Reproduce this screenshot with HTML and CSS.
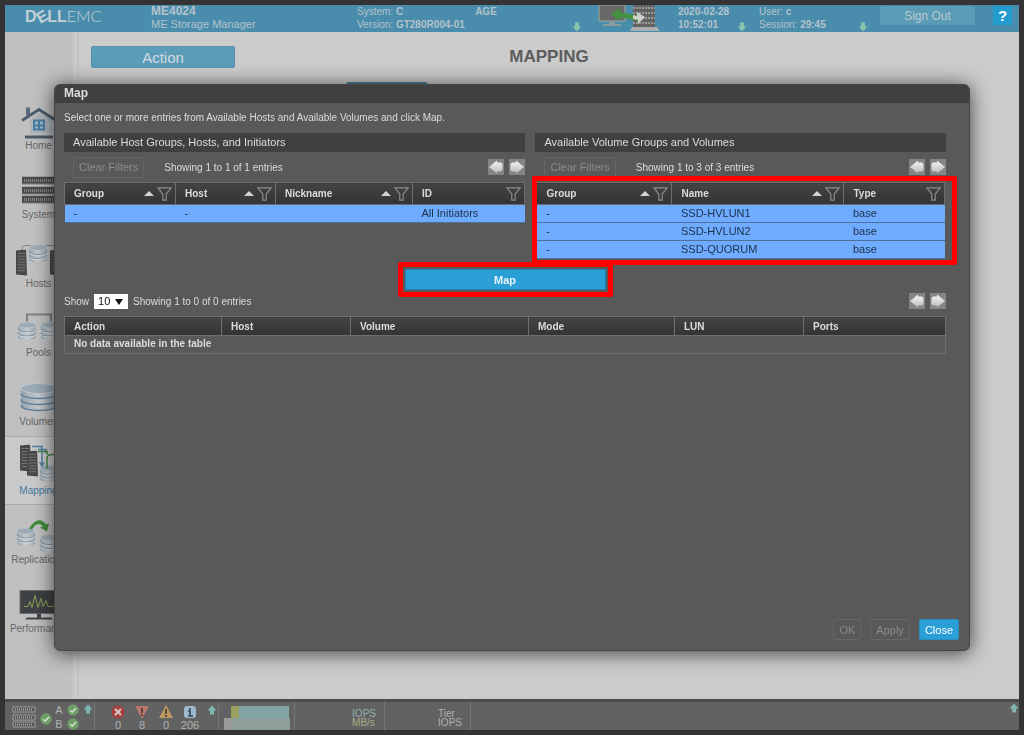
FILE: index.html
```
<!DOCTYPE html>
<html lang="en">
<head>
  <meta charset="UTF-8" />
  <title>ME Storage Manager</title>
  <link rel="stylesheet" href="styles.css">
</head>
<body>

<!-- shared icons -->
<svg class="sprite" aria-hidden="true">
  <linearGradient id="silver" x1="0" y1="0" x2="0" y2="1">
    <stop offset="0" stop-color="#fafafa"/><stop offset="1" stop-color="#b8b8b8"/>
  </linearGradient>
  <linearGradient id="disk" x1="0" y1="0" x2="1" y2="0">
    <stop offset="0" stop-color="#96a2ab"/><stop offset=".5" stop-color="#c6cbce"/><stop offset="1" stop-color="#97a3ac"/>
  </linearGradient>
  <symbol id="funnel" viewBox="0 0 15 14"><path d="M.8.8h13.4L9.2 7v6.2H5.8V7z" fill="none" stroke="#8c8c8c" stroke-width="1.2"/></symbol>
  <symbol id="sort" viewBox="0 0 10 5"><path d="M0 5 5 0l5 5z" fill="#d4d4d4"/></symbol>
  <symbol id="prev" viewBox="0 0 16 16"><path d="M1 8 9 1.500V3.500H13L14.500 5V11L13 12.500H9V14.500z" fill="url(#silver)"/></symbol>
  <symbol id="next" viewBox="0 0 16 16"><path d="M15 8 7 1.500V3.500H3L1.500 5V11L3 12.500H7V14.500z" fill="url(#silver)"/></symbol>
  <symbol id="arrow" viewBox="0 0 10 10"><path d="M5 .5 9.500 5.500H7V9.500H3V5.500H.5z"/></symbol>
  <symbol id="check" viewBox="0 0 12 12"><circle cx="6" cy="6" r="5.700" fill="#6f9d68"/><path d="M3.200 6.200 5.200 8.200 9 4" fill="none" stroke="#d5e2d2" stroke-width="1.600"/></symbol>
  <symbol id="cylinder" viewBox="0 0 20 20">
    <path d="M1 4v12c0 2 4 3 9 3s9-1 9-3V4z" fill="url(#disk)"/>
    <path d="M1 8c0 2 4 3 9 3s9-1 9-3M1 12c0 2 4 3 9 3s9-1 9-3" fill="none" stroke="#7e8e9b"/>
    <path d="M1 9c0 2 4 3 9 3s9-1 9-3M1 13c0 2 4 3 9 3s9-1 9-3" fill="none" stroke="#d8dbdc"/>
    <ellipse cx="10" cy="4" rx="9" ry="3" fill="#9cabb5" stroke="#bcc5ca"/>
  </symbol>
  <symbol id="rack" viewBox="0 0 12 28" preserveAspectRatio="none">
    <path d="M0 1 11 0 12 27 0 26z" fill="#484848"/>
    <path d="M2 4h8M2 7h8M2 10h8M2 13h8M2 16h8M2 19h8M2 22h8" stroke="#777"/>
  </symbol>
  <symbol id="shelf" viewBox="0 0 36 8">
    <path d="M0 0h36v8H0z" fill="#4c4c4c"/><path d="M2 4h32" stroke="#858585" stroke-width="3" stroke-dasharray="1 1"/><path d="M0 7.500h36" stroke="#858585"/>
  </symbol>
</svg>

<div class="app">
  <header class="banner">
    <div class="logo"><b>D<span class="tilt">E</span>LL</b><span class="emc">EMC</span></div>
    <div class="product"><b>ME4024</b><br>ME Storage Manager</div>
    <div class="system">
      <div>System: <b>C</b><b class="age">AGE</b><br>Version: <b>GT280R004-01</b></div>
      <svg class="arrow down"><use href="#arrow"/></svg>
    </div>
    <div class="link-state">
      <svg viewBox="0 0 66 27" width="66" height="27">
        <path d="M2 0h26v16H2z" fill="#686868" stroke="#a5a5a5"/><path d="M12 17h6v2H12zM6 19h18v2H6z" fill="#8e9ba1"/>
        <path d="M36 0h22v22H36z" fill="#626262"/><path d="M36 3h22M36 8h22M36 13h22M36 18h22" stroke="#999" stroke-width="2" stroke-dasharray="2 1"/>
        <path d="M35 22h25l3 4H33z" fill="#a9afb2"/>
        <path d="M14 9 23 3v4l18 4v5L23 12v4z" fill="#43923f"/><path d="M40 7 48 12 41 19v-4l-5-1v-4l4 1z" fill="#c8d2c6"/>
      </svg>
    </div>
    <div class="clock">
      <b>2020-02-28<br>10:52:01</b>
      <svg class="arrow down"><use href="#arrow"/></svg>
    </div>
    <div class="user">
      <div>User: <b>c</b><br>Session: <b>29:45</b></div>
      <svg class="arrow down"><use href="#arrow"/></svg>
    </div>
    <div class="tools"><button class="sign-out" type="button">Sign Out</button></div>
    <div class="tools"><button class="help" type="button">?</button></div>
  </header>

  <div class="workspace">
    <nav class="sidebar">
      <a href="#home">
        <svg viewBox="0 0 46 34"><path d="M14 14 24 7 36 14V28H14z" fill="#aeb6bb"/><path d="M10 2h4v8h-4z" fill="#57697a"/><path d="M6 15 23 4 40 15" fill="none" stroke="#4d5e6e" stroke-width="3"/><path d="M17 14h12v11H17z" fill="#4b7da0"/><path d="M19 16h3v3h-3zM24 16h3v3h-3zM19 21h3v2h-3zM24 21h3v2h-3z" fill="#9bbacb"/><path d="M9 30h28v3H9z" fill="#4e5b66"/></svg>
        Home
      </a>
      <a href="#system">
        <svg viewBox="0 0 46 34"><use href="#shelf" x="6" y="2" width="36" height="8"/><use href="#shelf" x="6" y="12" width="36" height="8"/><use href="#shelf" x="6" y="21" width="36" height="8"/></svg>
        System
      </a>
      <a href="#hosts">
        <svg viewBox="0 0 46 34"><path d="M6 7V4q0-2 3-2h28q3 0 3 2v3" fill="none" stroke="#7b8287"/><use href="#cylinder" x="12" y="0" width="20" height="20"/><use href="#rack" x="0" y="6" width="11" height="27"/><use href="#rack" x="34" y="6" width="11" height="27"/></svg>
        Hosts
      </a>
      <a href="#pools">
        <svg viewBox="0 0 46 34"><path d="M11 12V2h24v10" fill="none" stroke="#808080" stroke-width="2"/><use href="#cylinder" x="1" y="8" width="20" height="21"/><use href="#cylinder" x="24" y="8" width="20" height="21"/></svg>
        Pools
      </a>
      <a href="#volumes">
        <svg viewBox="0 0 46 34"><path d="M5 7v17c0 3 8 5 18 5s18-2 18-5V7z" fill="url(#disk)"/><path d="M5 12c0 3 8 5 18 5s18-2 18-5M5 18c0 3 8 5 18 5s18-2 18-5M5 24c0 3 8 5 18 5s18-2 18-5" fill="none" stroke="#5f7f9d" stroke-width="1.500"/><ellipse cx="23" cy="7" rx="18" ry="5" fill="#9aaab6" stroke="#c4cbd0"/></svg>
        Volumes
      </a>
      <a href="#mapping" class="selected">
        <svg viewBox="0 0 46 38"><use href="#cylinder" x="22" y="20" width="20" height="18"/><use href="#rack" x="4" y="0" width="11" height="28"/><use href="#rack" x="11" y="6" width="11" height="27"/><path d="M16 2h10v18M22 5h8v4" fill="none" stroke="#527d9c" stroke-width="1.500"/><path d="M22 7h9v3M31 24V14q0-4 5-4h6v8" fill="none" stroke="#438643" stroke-width="1.500"/><path d="m23 18 3 5 3-5z" fill="#527d9c"/></svg>
        Mapping
      </a>
      <a href="#replications">
        <svg viewBox="0 0 46 34"><use href="#cylinder" x="0" y="7" width="20" height="21"/><use href="#cylinder" x="23" y="14" width="20" height="20"/><path d="M13 9Q22-5 30 5l3-1-2 8-7-4 3-1q-5-6-11 3z" fill="#3e8b3b"/></svg>
        Replications
      </a>
      <a href="#performance">
        <svg viewBox="0 0 46 34"><path d="M4 2h38v23H4z" fill="#3f4245" stroke="#6d6d6d"/><path d="M8 18h4l2-5 2 6 3-12 3 12 3-9 2 8 3-6 2 6h6" fill="none" stroke="#87a054"/><path d="M21 25h4v4h-4zM11 29h24l2 2H9z" fill="#444"/></svg>
        Performance
      </a>
    </nav>

    <main class="page">
      <div class="page-head">
        <button class="action" type="button">Action</button>
        <h1>MAPPING</h1>
      </div>
      <div class="tabs"><span class="tab"></span></div>
    </main>
  </div>

  <footer class="status">
    <div class="cell health">
      <svg viewBox="0 0 24 22" width="24" height="22"><path d="M1 1h22v5H1zM1 9h22v5H1zM1 16h22v5H1z" fill="#555" stroke="#a09f9f"/><path d="M3 3.500h18M3 11.500h18M3 18.500h18" stroke="#aaa" stroke-width="2" stroke-dasharray="1 1"/></svg>
      <svg class="ok"><use href="#check"/></svg>
      <div class="controllers">
        <span>A</span><svg class="ok"><use href="#check"/></svg>
        <span>B</span><svg class="ok"><use href="#check"/></svg>
      </div>
      <svg class="arrow"><use href="#arrow"/></svg>
    </div>
    <div class="cell events">
      <div><svg viewBox="0 0 14 14"><circle cx="7" cy="7" r="6.500" fill="#a83f41"/><path d="m4 4 6 6M10 4l-6 6" stroke="#d5c8c8" stroke-width="2"/></svg>0</div>
      <div><svg viewBox="0 0 14 14"><path d="M0 1h14L7 14z" fill="#b9786c"/><path d="M7 3v5M7 9v2" stroke="#4e3531" stroke-width="1.600"/></svg>8</div>
      <div><svg viewBox="0 0 14 14"><path d="M7 0 14 13H0z" fill="#bc9a61"/><path d="M7 4v5M7 10v2" stroke="#3e372b" stroke-width="1.600"/></svg>0</div>
      <div><svg viewBox="0 0 14 14"><rect x="1" y="1" width="12" height="12" rx="3" fill="#9fb8cb"/><path d="M5 6h2v5M5 11h5M7 3v2" fill="none" stroke="#31465c" stroke-width="1.600"/></svg>206</div>
      <svg class="arrow"><use href="#arrow"/></svg>
    </div>
    <div class="cell capacity">
      <div class="bar pool"><i></i></div>
      <div class="bar disks"><i></i></div>
    </div>
    <div class="cell iops"><span>IOPS<br><em>MB/s</em></span></div>
    <div class="cell tier"><span>Tier<br>IOPS</span></div>
    <svg class="arrow last"><use href="#arrow"/></svg>
  </footer>
</div>

<!-- map dialog -->
<section class="dialog" role="dialog" aria-labelledby="dialogTitle">
  <h2 id="dialogTitle">Map</h2>
  <div class="dialog-body">
    <p class="hint">Select one or more entries from Available Hosts and Available Volumes and click Map.</p>

    <div class="panels">
      <div class="panel">
        <h3>Available Host Groups, Hosts, and Initiators</h3>
        <div class="toolbar">
          <button class="ghost" type="button" disabled>Clear Filters</button>
          <span>Showing 1 to 1 of 1 entries</span>
          <div class="pager">
            <button type="button" aria-label="Previous"><svg><use href="#prev"/></svg></button>
            <button type="button" aria-label="Next"><svg><use href="#next"/></svg></button>
          </div>
        </div>
        <table class="grid hosts">
          <colgroup><col class="c1"><col class="c2"><col class="c3"><col></colgroup>
          <thead>
            <tr>
              <th><div>Group<svg class="sort"><use href="#sort"/></svg><svg class="funnel"><use href="#funnel"/></svg></div></th>
              <th><div>Host<svg class="sort"><use href="#sort"/></svg><svg class="funnel"><use href="#funnel"/></svg></div></th>
              <th><div>Nickname<svg class="sort"><use href="#sort"/></svg><svg class="funnel"><use href="#funnel"/></svg></div></th>
              <th><div>ID<svg class="funnel only"><use href="#funnel"/></svg></div></th>
            </tr>
          </thead>
          <tbody>
            <tr><td>-</td><td>-</td><td></td><td>All Initiators</td></tr>
          </tbody>
        </table>
      </div>

      <div class="panel">
        <h3>Available Volume Groups and Volumes</h3>
        <div class="toolbar">
          <button class="ghost" type="button" disabled>Clear Filters</button>
          <span>Showing 1 to 3 of 3 entries</span>
          <div class="pager">
            <button type="button" aria-label="Previous"><svg><use href="#prev"/></svg></button>
            <button type="button" aria-label="Next"><svg><use href="#next"/></svg></button>
          </div>
        </div>
        <div class="marked">
          <table class="grid volumes">
            <colgroup><col class="c1"><col class="c2"><col></colgroup>
            <thead>
              <tr>
                <th><div>Group<svg class="sort"><use href="#sort"/></svg><svg class="funnel"><use href="#funnel"/></svg></div></th>
                <th><div>Name<svg class="sort"><use href="#sort"/></svg><svg class="funnel"><use href="#funnel"/></svg></div></th>
                <th><div>Type<svg class="funnel only"><use href="#funnel"/></svg></div></th>
              </tr>
            </thead>
            <tbody>
              <tr><td>-</td><td>SSD-HVLUN1</td><td>base</td></tr>
              <tr><td>-</td><td>SSD-HVLUN2</td><td>base</td></tr>
              <tr><td>-</td><td>SSD-QUORUM</td><td>base</td></tr>
            </tbody>
          </table>
        </div>
      </div>
    </div>

    <div class="map-row">
      <div class="map-mark"><button class="map" type="button">Map</button></div>
    </div>

    <div class="show-row">
      <label for="pageSize">Show</label>
      <div class="picker">
        <select id="pageSize"><option>10</option><option>20</option><option>50</option></select>
      </div>
      <span>Showing 1 to 0 of 0 entries</span>
      <div class="pager">
        <button type="button" aria-label="Previous"><svg><use href="#prev"/></svg></button>
        <button type="button" aria-label="Next"><svg><use href="#next"/></svg></button>
      </div>
    </div>

    <table class="result">
      <colgroup><col class="c1"><col class="c2"><col class="c3"><col class="c4"><col class="c5"><col></colgroup>
      <thead>
        <tr><th>Action</th><th>Host</th><th>Volume</th><th>Mode</th><th>LUN</th><th>Ports</th></tr>
      </thead>
      <tbody>
        <tr><td colspan="6">No data available in the table</td></tr>
      </tbody>
    </table>
  </div>

  <div class="dialog-foot">
    <button class="ghost" type="button" disabled>OK</button>
    <button class="ghost" type="button" disabled>Apply</button>
    <button class="close" type="button">Close</button>
  </div>
</section>

</body>
</html>
```
FILE: styles.css
```
* {
  box-sizing: border-box;
}

body {
  margin: 0;
  background: #343434;
  font-family: "Liberation Sans", Arial, sans-serif;
  font-size: 10px;
  color: #dcdcdc;
}

h1, h2, h3, p {
  margin: 0;
}

button, select {
  font-family: inherit;
  margin: 0;
  padding: 0;
}

svg {
  display: block;
  flex: none;
}

.sprite {
  position: absolute;
  width: 0;
  height: 0;
}

.app {
  display: flex;
  flex-direction: column;
  height: 100vh;
  padding: 5px;
  overflow: hidden;
}

.arrow {
  width: 10px;
  height: 10px;
  fill: #7fb5ae;
}

.arrow.down {
  transform: rotate(180deg);
  fill: #8cc4b0;
}

/* top banner */
.banner {
  display: grid;
  grid-template-columns: 146px 206px 1fr 81px 81px 121px 113px 26px;
  grid-template-rows: 27px;
  flex: none;
  background: #4a8cab;
  color: #b3c3cb;
  line-height: 13px;
}

.logo {
  padding-left: 20px;
  font-size: 16px;
  line-height: 22px;
  color: #c3d0d7;
}

.logo .tilt {
  display: inline-block;
  transform: rotate(-30deg);
}

.logo .emc {
  font-family: Lato, sans-serif;
  font-weight: 300;
}

.product {
  font-size: 11px;
}

.product b {
  font-size: 12px;
}

.system, .clock, .user {
  display: flex;
  justify-content: space-between;
  align-items: flex-end;
}

.system {
  padding-right: 15px;
}

.age {
  margin-left: 72px;
}

.clock {
  padding-right: 12px;
}

.user {
  padding-right: 12px;
}

.system > div, .clock > b, .user > div {
  align-self: flex-start;
}

.tools {
  padding-top: 1px;
}

.sign-out {
  width: 95px;
  height: 19px;
  border: 0;
  border-radius: 2px;
  background: #5a9bb6;
  color: #b9cad1;
  font-size: 12px;
}

.help {
  width: 19px;
  height: 19px;
  border: 0;
  background: #229bcf;
  color: #fff;
  font-size: 15px;
  font-weight: bold;
}

/* page behind the dialog */
.workspace {
  display: flex;
  flex: 1;
  min-height: 0;
  background: #cbcbcb;
}

.sidebar {
  flex: none;
  width: 67px;
  padding-top: 59px;
  background: #c0c0c0;
  overflow: hidden;
}

.sidebar a {
  display: flex;
  flex-direction: column;
  align-items: center;
  height: 69px;
  padding-top: 14px;
  line-height: 12px;
  color: #666;
  text-decoration: none;
}

.sidebar svg {
  width: 46px;
  height: 35px;
}

.sidebar .selected {
  padding-top: 5px;
  border-top: 1px solid #aaa;
  border-bottom: 1px solid #aaa;
  background: #c9c9c9;
  color: #4678a0;
}

.sidebar .selected svg {
  height: 43px;
}

.page {
  flex: 1;
  border-left: 7px double #c4c4c4;
}

.page-head {
  display: grid;
  grid-template-columns: 1fr auto 1fr;
  align-items: center;
  padding: 14px 12px;
}

.action {
  width: 144px;
  height: 22px;
  border: 1px solid #5692ad;
  border-radius: 2px;
  background: #5b9cb9;
  color: #d3dce0;
  font-size: 15px;
}

.page h1 {
  font-size: 17px;
  line-height: 20px;
  color: #5c5c5c;
}

.tabs {
  padding-left: 267px;
}

.tab {
  display: block;
  width: 82px;
  height: 20px;
  border-radius: 3px;
  background: #4a7f96;
}

/* bottom status bar */
.status {
  display: flex;
  flex: none;
  height: 31px;
  border-top: 3px solid #4b4b4b;
  background: #626262;
  overflow: hidden;
  color: #b0b0b0;
  font-size: 11px;
}

.cell {
  display: flex;
  border-right: 1px solid #777;
}

.health {
  width: 90px;
  padding: 2px 1px 0 7px;
  gap: 2px;
  justify-content: space-between;
}

.health > svg:first-child {
  margin-top: 2px;
}

.ok {
  width: 12px;
  height: 12px;
}

.health > .ok {
  margin-top: 9px;
}

.controllers {
  display: grid;
  grid-template-columns: 10px 12px;
  gap: 2px;
  line-height: 12px;
}

.events {
  width: 124px;
  padding: 3px 1px 0 11px;
}

.events div {
  display: flex;
  flex-direction: column;
  align-items: center;
  width: 24px;
  line-height: 12px;
}

.events div svg {
  width: 14px;
  height: 14px;
}

.events .arrow {
  margin-left: auto;
}

.capacity {
  flex-direction: column;
  width: 76px;
  padding: 4px 4px 0 5px;
}

.bar {
  display: flex;
  background: #81a5a2;
  height: 12px;
}

.bar i {
  width: 8px;
  background: #9a9f5d;
}

.bar.pool {
  margin: 0 1px 0 7px;
}

.bar.disks {
  background: #8d9e9b;
}

.bar.disks i {
  background: #999;
}

.iops, .tier {
  justify-content: flex-end;
  padding: 7px 8px 0 0;
  font-size: 10px;
  line-height: 9px;
}

.iops {
  width: 90px;
  color: #8fb0ab;
}

.iops em {
  font-style: normal;
  color: #a7ad83;
}

.tier {
  width: 86px;
}

.last {
  margin: 1px 0 0 auto;
}

/* dialog */
.dialog {
  position: fixed;
  inset: 84px 54px;
  display: flex;
  flex-direction: column;
  border: 1px solid #474747;
  border-radius: 6px;
  background: #595959;
  box-shadow: 0 2px 20px rgba(0, 0, 0, 0.7);
}

.dialog h2 {
  height: 18px;
  padding-left: 9px;
  border-radius: 5px 5px 0 0;
  background: #404040;
  font-size: 12px;
  line-height: 17px;
}

.dialog-body {
  flex: 1;
  padding: 7px 23px 0 9px;
}

.hint {
  line-height: 16px;
}

.panels {
  display: grid;
  grid-template-columns: 462fr 411fr;
  gap: 10px;
  margin-top: 7px;
}

.panel h3 {
  height: 19px;
  padding-left: 9px;
  background: #404040;
  font-size: 11px;
  font-weight: normal;
  line-height: 18px;
}

.toolbar {
  display: flex;
  align-items: center;
  gap: 20px;
  height: 30px;
  padding-left: 9px;
}

.ghost {
  height: 21px;
  padding: 0 5px;
  border: 1px solid #666;
  border-radius: 2px;
  background: transparent;
  color: #8b8b8b;
  font-size: 11px;
}

.pager {
  display: flex;
  gap: 5px;
  margin-left: auto;
}

.pager button {
  width: 16px;
  height: 16px;
  border: 0;
  background: #858585;
}

.pager svg {
  width: 16px;
  height: 16px;
}

table {
  width: 100%;
  border-collapse: collapse;
  table-layout: fixed;
}

th {
  height: 22px;
  padding: 0 3px 0 9px;
  border: 1px solid #6e6e6e;
  background: linear-gradient(#444, #333);
  text-align: left;
}

th div {
  display: flex;
  align-items: center;
}

.sort {
  width: 10px;
  height: 5px;
  margin-left: auto;
}

.funnel {
  width: 15px;
  height: 14px;
  margin-left: 3px;
}

.funnel.only {
  margin-left: auto;
}

td {
  height: 18px;
  padding: 0 9px 2px;
  line-height: 14px;
}

.grid td {
  border-bottom: 1px solid #4f7199;
  background: #6fabff;
  color: #1d3048;
  font-size: 11px;
}

.hosts .c1 { width: 111px; }
.hosts .c2 { width: 100px; }
.hosts .c3 { width: 137px; }

.volumes .c1 { width: 135px; }
.volumes .c2 { width: 172px; }

/* red frames around the parts to use */
.marked {
  position: relative;
  margin: 0 1px;
}

.marked::after {
  content: "";
  position: absolute;
  inset: -6px -12px -6px -4px;
  border: 5px solid #f00;
  border-radius: 2px;
  pointer-events: none;
}

.map-row {
  display: flex;
  justify-content: center;
  margin-top: 3px;
}

.map-mark {
  padding: 2px;
  border: 5px solid #f00;
  border-radius: 2px;
}

.map {
  display: block;
  width: 201px;
  height: 21px;
  border: 1px solid #1d83b0;
  background: #2a9fd6;
  color: #e6f2f8;
  font-size: 11px;
  font-weight: bold;
}

.show-row {
  display: flex;
  align-items: center;
  gap: 5px;
  height: 20px;
  margin-top: -6px;
}

.picker {
  position: relative;
}

.picker::after {
  content: "";
  position: absolute;
  right: 5px;
  top: 5px;
  border: 4px solid transparent;
  border-top: 6px solid #111;
  border-bottom: 0;
  pointer-events: none;
}

.picker select {
  display: block;
  width: 34px;
  height: 15px;
  padding-left: 4px;
  border: 0;
  appearance: none;
  background: #fff;
  color: #111;
  font-size: 11px;
}

.result {
  margin-top: 5px;
}

.result th {
  height: 19px;
}

.result td {
  border: 1px solid #6e6e6e;
  font-weight: bold;
}

.result .c1 { width: 157px; }
.result .c2 { width: 129px; }
.result .c3 { width: 178px; }
.result .c4 { width: 146px; }
.result .c5 { width: 129px; }

.dialog-foot {
  display: flex;
  justify-content: flex-end;
  gap: 9px;
  padding: 0 10px 10px;
}

.close {
  height: 21px;
  padding: 0 5px;
  border: 1px solid #2790c1;
  border-radius: 2px;
  background: #2a9fd6;
  color: #fff;
  font-size: 11px;
}
```
